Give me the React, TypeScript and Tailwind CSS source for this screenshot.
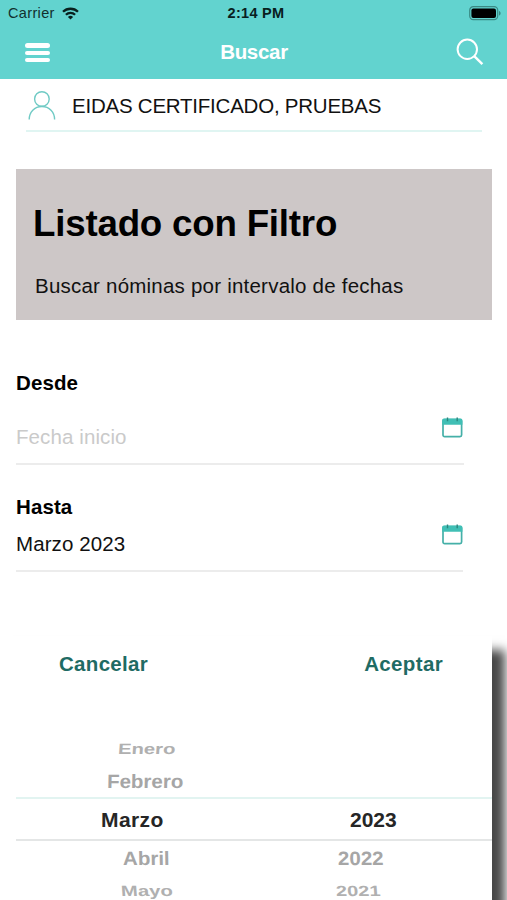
import { useState } from "react";
import clsx from "clsx";

type PickerRow = {
  month: string;
  year?: string;
  rowClass: string;
  monthClass: string;
  yearClass: string;
};

const ROWS: PickerRow[] = [
  {
    month: "Enero",
    rowClass: "h-[30px] text-[#b0b0b0]",
    monthClass: "ml-[102px] translate-y-[2px] -skew-x-3 scale-y-[0.74] text-[20.3px]",
    yearClass: "",
  },
  {
    month: "Febrero",
    rowClass: "h-[35px] text-[#a6a6a6]",
    monthClass: "ml-[91px] translate-y-[2px] -skew-x-1 scale-y-[0.94] text-[20.5px]",
    yearClass: "",
  },
  {
    month: "Marzo",
    year: "2023",
    rowClass: "h-[44px] border-t-2 border-b-2 border-t-[#e2f4f1] border-b-[#e4e6e6] text-[#262626]",
    monthClass: "ml-[85px] translate-y-px text-[21px] tracking-[0.4px]",
    yearClass: "left-[334px] translate-y-px text-[21px]",
  },
  {
    month: "Abril",
    year: "2022",
    rowClass: "h-[34px] text-[#a6a6a6]",
    monthClass: "ml-[107px] skew-x-1 scale-y-[0.94] text-[20.5px]",
    yearClass: "left-[322px] skew-x-1 scale-y-[0.94] text-[20.5px]",
  },
  {
    month: "Mayo",
    year: "2021",
    rowClass: "h-[32px] text-[#b0b0b0]",
    monthClass: "ml-[105px] skew-x-3 scale-y-[0.74] text-[20.3px]",
    yearClass: "left-[320px] skew-x-3 scale-y-[0.74] text-[20px]",
  },
];

function WifiIcon() {
  return (
    <svg className="h-[13px] w-[17px]" viewBox="0 0 17 13" fill="none" stroke="#08201e" strokeWidth="2.3">
      <path d="M1 4.8a10.7 10.7 0 0 1 15 0" />
      <path d="M3.9 7.7a6.6 6.6 0 0 1 9.2 0" />
      <path d="M8.5 12.6 5.9 9.9a3.8 3.8 0 0 1 5.2 0z" fill="#08201e" stroke="none" />
    </svg>
  );
}

function BatteryIcon() {
  return (
    <svg className="h-[15px] w-[32px]" viewBox="0 0 32 15">
      <rect x="0.7" y="0.7" width="28" height="13" rx="3.6" fill="none" stroke="#3a8a84" strokeWidth="1.2" />
      <rect x="2.4" y="2.4" width="24.6" height="9.6" rx="2" fill="#000" />
      <path d="M30 5v4.6c1-.4 1.6-1.2 1.6-2.3S31 5.400 30 5z" fill="#3a8a84" />
    </svg>
  );
}

function CalendarIcon() {
  return (
    <svg className="h-[21px] w-[21px]" viewBox="0 0 21 21">
      <rect x="1" y="2.500" width="18.600" height="17.200" rx="1.600" fill="#fff" stroke="#45b0a8" strokeWidth="1.700" />
      <path d="M.2 7.800V3.500c0-1 .7-1.900 1.700-1.900h16.800c1 0 1.700.9 1.700 1.900v4.300z" fill="#40bfb5" />
      <path d="M5.500.4v3.800M15.200.4v3.800" stroke="#2c857f" strokeWidth="1.400" />
    </svg>
  );
}

function DateField({
  label,
  value,
  placeholder,
  tall,
}: {
  label: string;
  value?: string;
  placeholder?: string;
  tall?: boolean;
}) {
  return (
    <div className={clsx("ml-4", tall ? "w-[448px]" : "w-[447px]")}>
      <p className="h-6 text-[20.5px] leading-6 font-bold tracking-[0.1px]">{label}</p>
      <button
        type="button"
        className={clsx(
          "flex w-full justify-between border-b-2 border-[#ececec] text-left",
          tall ? "h-[70px] pt-[22px]" : "h-[53px] pt-[5px]"
        )}
      >
        <span
          className={clsx(
            "mt-[8px] text-[20.5px] leading-6 tracking-[0.1px]",
            value ? "text-[#111]" : "text-[#cacaca]"
          )}
        >
          {value ?? placeholder}
        </span>
        <span className={tall ? "mr-[1px]" : "mr-0"}>
          <CalendarIcon />
        </span>
      </button>
    </div>
  );
}

export default function App() {
  const [selected] = useState("Marzo 2023");

  return (
    <div className="relative flex h-[900px] w-[507px] flex-col overflow-hidden bg-white font-['Liberation_Sans',Arial,sans-serif] text-black">
      <header className="h-[79px] shrink-0 bg-[#62d3cf]">
        <div className="grid h-[27px] grid-cols-3 items-center pr-1.5 pl-2">
          <div className="flex items-center gap-[7px] text-[14.5px] tracking-[0.35px] text-[#12302e]">
            Carrier
            <WifiIcon />
          </div>
          <div className="pl-[3px] text-center text-[14.5px] font-bold tracking-[0.3px] text-[#08201e]">2:14 PM</div>
          <div className="flex justify-end">
            <BatteryIcon />
          </div>
        </div>
        <div className="flex h-[50px] items-center justify-between pr-[23px] pl-[25px]">
          <button type="button" className="flex w-[25px] flex-col gap-[3px]">
            <span className="h-[5px] rounded-full bg-white" />
            <span className="h-[4px] rounded-full bg-white" />
            <span className="h-[4px] rounded-full bg-white" />
          </button>
          <h1 className="pl-[2px] text-[20.5px] font-bold tracking-[-0.3px] text-white">Buscar</h1>
          <button type="button">
            <svg className="h-[28px] w-[28px]" viewBox="0 0 28 28" fill="none" stroke="#fff" strokeWidth="2">
              <circle cx="11.300" cy="11.300" r="9.700" />
              <path d="m18.200 18.200 8.200 8" strokeWidth="2.400" />
            </svg>
          </button>
        </div>
      </header>

      <div className="mr-[25px] ml-[26px] flex h-[53px] shrink-0 items-center border-b-2 border-[#e0f5f2]">
        <svg className="mt-[2px] ml-[2px] h-[29px] w-[28px]" viewBox="0 0 28 29" fill="none" stroke="#6fcac4" strokeWidth="1.400">
          <circle cx="13.900" cy="8" r="7.300" />
          <path d="M1.200 28.500C1.200 21 6.500 15.500 13.900 15.500S26.600 21 26.600 28.500" />
        </svg>
        <span className="mt-[4px] ml-[16px] text-[20.5px] tracking-[-0.23px] text-[#111]">
          EIDAS CERTIFICADO, PRUEBAS
        </span>
      </div>

      <section className="mr-[15px] ml-4 mt-[37px] h-[151px] shrink-0 bg-[#cdc7c7] pt-[32px]">
        <h2 className="ml-[17px] text-[36.700px] leading-[46px] font-bold tracking-[-0.2px]">Listado con Filtro</h2>
        <p className="mt-[27px] ml-[19px] text-[20.5px] leading-6 tracking-[0.22px] text-[#111]">
          Buscar nóminas por intervalo de fechas
        </p>
      </section>

      <div className="mt-[51px]">
        <DateField label="Desde" placeholder="Fecha inicio" tall />
      </div>
      <div className="mt-[30px]">
        <DateField label="Hasta" value={selected} />
      </div>

      <div className="mt-[64px] mr-[15px] flex grow flex-col bg-white pt-[12px] shadow-[13px_14px_10px_0px_#484848]">
        <div className="flex h-[33px] items-center justify-between pr-[49px] pl-[59px] text-[20.5px] font-bold text-[#1f6b64]">
          <button type="button" className="tracking-[0.3px]">Cancelar</button>
          <button type="button" className="tracking-[0.35px]">Aceptar</button>
        </div>
        <div className="mt-[51px] ml-4 font-bold">
          {ROWS.map((row) => (
            <div key={row.month} className={clsx("relative flex items-center", row.rowClass)}>
              <span className={row.monthClass}>{row.month}</span>
              {row.year && <span className={clsx("absolute", row.yearClass)}>{row.year}</span>}
            </div>
          ))}
        </div>
      </div>
    </div>
  );
}
